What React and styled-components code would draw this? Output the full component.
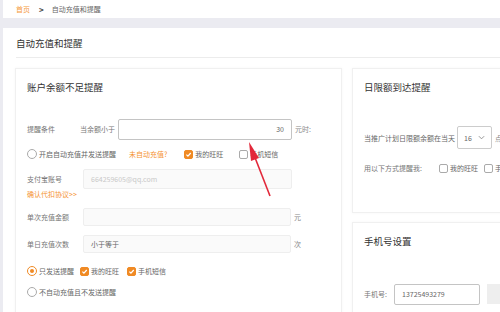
import React from 'react';
import styled, { createGlobalStyle } from 'styled-components';

const Global = createGlobalStyle`
  body {
    margin: 0;
    background: #ebebf1;
    font-family: "Noto Sans CJK SC", "Noto Sans", sans-serif;
    color: #666;
  }
`;

const Page = styled.div`
  width: 500px;
  height: 312px;
  overflow: hidden;
  position: relative;
  padding-left: 3px;
  box-sizing: border-box;
`;

const Crumbs = styled.div`
  height: 18px;
  background: #fff;
  display: flex;
  align-items: center;
  padding-left: 13px;
  font-size: 7px;
  color: #666;
  gap: 8px;
  .home {
    color: #f59a3c;
  }
  .sep {
    font-size: 8px;
    color: #444;
    font-weight: bold;
    margin-left: 1px;
  }
`;

const Panel = styled.div`
  margin-top: 10px;
  background: #fff;
  height: 300px;
`;

const PanelTitle = styled.div`
  margin-left: 13px;
  height: 29px;
  border-bottom: 1px solid #ececec;
  display: flex;
  align-items: center;
  font-size: 9.5px;
  color: #333;
`;

const Columns = styled.div`
  display: flex;
  gap: 10px;
  padding: 10px 0 0 12px;
`;

const Card = styled.div`
  width: ${(p) => p.$w}px;
  height: ${(p) => p.$h}px;
  flex-shrink: 0;
  border: 1px solid #f0f0f0;
  box-shadow: 0 0 3px rgba(0, 0, 0, 0.04);
  box-sizing: border-box;
  padding: 12px 0 0 11px;
`;

const Stack = styled.div`
  display: flex;
  flex-direction: column;
  gap: 9px;
`;

const CardTitle = styled.div`
  font-size: 9.5px;
  color: #333;
  line-height: 13px;
  margin-bottom: ${(p) => p.$mb}px;
`;

const Row = styled.div`
  display: flex;
  align-items: center;
  height: ${(p) => p.$h || 20}px;
  margin-top: ${(p) => p.$mt || 0}px;
  font-size: 7px;
  white-space: nowrap;
`;

const Label = styled.span`
  width: ${(p) => p.$w}px;
  flex-shrink: 0;
  color: #777;
`;

const Input = styled.div`
  width: ${(p) => p.$w}px;
  height: ${(p) => p.$h || 18}px;
  box-sizing: border-box;
  border: 1px solid ${(p) => (p.$active ? '#c4c4c4' : '#eeeeee')};
  border-radius: 2px;
  background: ${(p) => (p.$active ? '#fff' : '#fafafa')};
  display: flex;
  align-items: center;
  justify-content: ${(p) => (p.$right ? 'flex-end' : 'flex-start')};
  padding: 0 7px;
  font-size: 7px;
  color: ${(p) => (p.$muted ? '#c8c8c8' : '#666')};
  flex-shrink: 0;
`;

const Suffix = styled.span`
  margin-left: 3px;
  color: #888;
`;

const Radio = styled.span`
  width: 8px;
  height: 8px;
  border-radius: 50%;
  border: 1px solid ${(p) => (p.$on ? '#f08a24' : '#aaa')};
  margin-right: 2px;
  display: inline-flex;
  align-items: center;
  justify-content: center;
  flex-shrink: 0;
  &::after {
    content: '';
    width: 4px;
    height: 4px;
    border-radius: 50%;
    background: ${(p) => (p.$on ? '#f08a24' : 'transparent')};
  }
`;

const Check = styled.span`
  width: 9px;
  height: 9px;
  box-sizing: border-box;
  border-radius: 2px;
  border: 1px solid ${(p) => (p.$on ? '#f08a24' : '#aaa')};
  background: ${(p) => (p.$on ? '#f08a24' : '#fff')};
  margin: 0 2px 0 ${(p) => p.$ml || 0}px;
  display: inline-flex;
  align-items: center;
  justify-content: center;
  flex-shrink: 0;
  svg {
    display: ${(p) => (p.$on ? 'block' : 'none')};
  }
`;

const Orange = styled.span`
  color: #f5922f;
  margin-left: ${(p) => p.$ml || 0}px;
`;

const LinkRow = styled.div`
  height: 10px;
  font-size: 7px;
  line-height: 10px;
  color: #f5922f;
`;

const Select = styled.div`
  width: 35px;
  height: 23px;
  box-sizing: border-box;
  border: 1px solid #ccc;
  border-radius: 2px;
  display: flex;
  align-items: center;
  justify-content: space-between;
  padding: 0 6px;
  margin-left: 2px;
  color: #666;
  flex-shrink: 0;
`;

const Button = styled.div`
  width: 20px;
  height: 20px;
  background: #eee;
  margin-left: 7px;
  flex-shrink: 0;
`;

const Arrow = styled.svg`
  position: absolute;
  left: 0;
  top: 0;
  pointer-events: none;
`;

const Tick = () => (
  <svg width="7" height="7" viewBox="0 0 10 10">
    <path d="M2 5.2 L4.2 7.3 L8.2 2.8" fill="none" stroke="#fff" strokeWidth="1.8" />
  </svg>
);

export default function App() {
  return (
    <>
      <Global />
      <Page>
        <Crumbs>
          <span className="home">首页</span>
          <span className="sep">&gt;</span>
          <span>自动充值和提醒</span>
        </Crumbs>
        <Panel>
          <PanelTitle>自动充值和提醒</PanelTitle>
          <Columns>
            <Card $w={327} $h={260}>
              <CardTitle $mb={24}>账户余额不足提醒</CardTitle>
              <Row $h={22}>
                <Label $w={53}>提醒条件</Label>
                <Label $w={38}>当余额小于</Label>
                <Input $w={174} $h={21} $active $right>30</Input>
                <Suffix>元时:</Suffix>
              </Row>
              <Row $mt={4}>
                <Radio />
                <span>开启自动充值并发送提醒</span>
                <Orange $ml={13}>未自动充值?</Orange>
                <Check $on $ml={17}><Tick /></Check>
                <span>我的旺旺</span>
                <Check $ml={16}><Tick /></Check>
                <span>手机短信</span>
              </Row>
              <Row $mt={5}>
                <Label $w={56}>支付宝账号</Label>
                <Input $w={209} $h={20} $muted>664259605@qq.com</Input>
              </Row>
              <LinkRow>确认代扣协议&gt;&gt;</LinkRow>
              <Row $mt={8}>
                <Label $w={56}>单次充值金额</Label>
                <Input $w={208} $h={18} />
                <Suffix>元</Suffix>
              </Row>
              <Row $mt={7}>
                <Label $w={56}>单日充值次数</Label>
                <Input $w={208} $h={18}>小于等于</Input>
                <Suffix>次</Suffix>
              </Row>
              <Row $mt={7}>
                <Radio $on />
                <span>只发送提醒</span>
                <Check $on $ml={6}><Tick /></Check>
                <span>我的旺旺</span>
                <Check $on $ml={8}><Tick /></Check>
                <span>手机短信</span>
              </Row>
              <Row $mt={1}>
                <Radio />
                <span>不自动充值且不发送提醒</span>
              </Row>
            </Card>
            <Stack>
              <Card $w={160} $h={145}>
                <CardTitle $mb={32}>日限额到达提醒</CardTitle>
                <Row $h={23}>
                  <span>当推广计划日限额余额在当天</span>
                  <Select>
                    <span>16</span>
                    <svg width="7" height="5" viewBox="0 0 8 5">
                      <path d="M1 1 L4 4 L7 1" fill="none" stroke="#888" strokeWidth="1" />
                    </svg>
                  </Select>
                  <Suffix>点</Suffix>
                </Row>
                <Row $mt={9}>
                  <Label $w={75}>用以下方式提醒我:</Label>
                  <Check />
                  <span>我的旺旺</span>
                  <Check $ml={6} />
                  <span>手机短信</span>
                </Row>
              </Card>
              <Card $w={160} $h={100}>
                <CardTitle $mb={36}>手机号设置</CardTitle>
                <Row>
                  <Label $w={30}>手机号:</Label>
                  <Input $w={86} $h={21} $active>13725493279</Input>
                  <Button />
                </Row>
              </Card>
            </Stack>
          </Columns>
        </Panel>
        <Arrow width="500" height="312" viewBox="0 0 500 312">
          <line x1="270" y1="196" x2="254" y2="155" stroke="#e2283a" strokeWidth="1.6" />
          <polygon points="249,142 259,158 251,161" fill="#e2283a" />
        </Arrow>
      </Page>
    </>
  );
}
